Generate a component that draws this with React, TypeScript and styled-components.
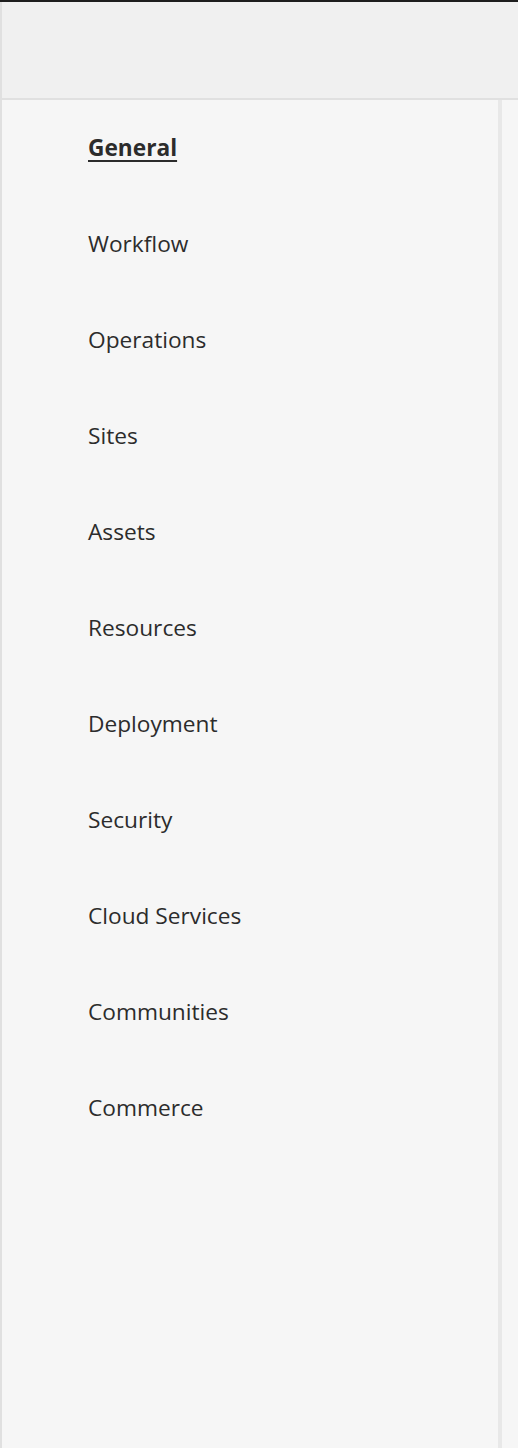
import React from "react";
import styled, { createGlobalStyle } from "styled-components";

const Global = createGlobalStyle`
  html, body { margin: 0; padding: 0; background: #f6f6f6; }
  body { font-family: "Open Sans", "Noto Sans", "Liberation Sans", sans-serif; }
  #root { min-height: 100vh; }
`;

const Page = styled.div`
  display: flex;
  flex-direction: column;
  min-height: 100vh;
  border-top: 2px solid #1e1e1e;
  box-sizing: border-box;
`;

const Frame = styled.div`
  flex: 1;
  display: flex;
  flex-direction: column;
  border-left: 2px solid #e0e0e0;
`;

const Header = styled.header`
  height: 96px;
  background: #f0f0f0;
  border-bottom: 2px solid #e0e0e0;
`;

const Body = styled.div`
  flex: 1;
  display: flex;
`;

const Sidebar = styled.nav`
  width: 500px;
  background: #f6f6f6;
  border-right: 4px solid #e8e8e8;
  display: flex;
  flex-direction: column;
  padding-left: 86px;
  box-sizing: border-box;
`;

const Content = styled.main`
  flex: 1;
  background: #f6f6f6;
`;

const NavItem = styled.a<{ $active?: boolean }>`
  height: 96px;
  box-sizing: border-box;
  padding-bottom: 2px;
  display: flex;
  align-items: center;
  font-size: 22.7px;
  color: #2c2c2c;
  font-weight: ${(p) => (p.$active ? 700 : 400)};
  text-decoration: ${(p) => (p.$active ? "underline" : "none")};
  text-decoration-thickness: 2px;
  text-underline-offset: 4px;
  cursor: pointer;
  align-self: flex-start;
`;

const items = [
  "General",
  "Workflow",
  "Operations",
  "Sites",
  "Assets",
  "Resources",
  "Deployment",
  "Security",
  "Cloud Services",
  "Communities",
  "Commerce",
];

export default function App() {
  return (
    <>
      <Global />
      <Page>
        <Frame>
          <Header />
          <Body>
            <Sidebar>
              {items.map((it, i) => (
                <NavItem key={it} $active={i === 0}>
                  {it}
                </NavItem>
              ))}
            </Sidebar>
            <Content />
          </Body>
        </Frame>
      </Page>
    </>
  );
}
